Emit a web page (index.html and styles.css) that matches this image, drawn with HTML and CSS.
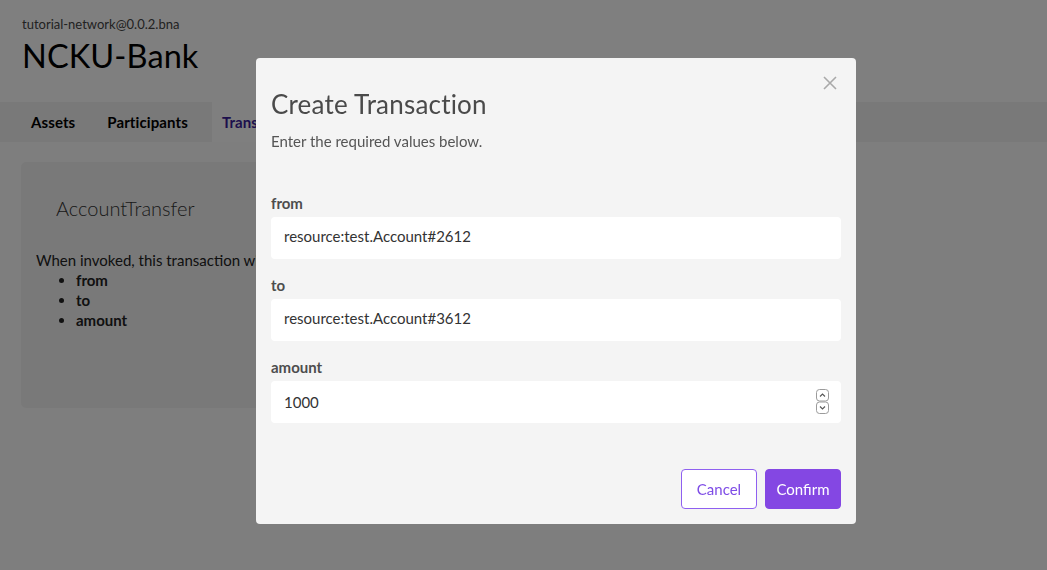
FILE: index.html
```html
<!DOCTYPE html>
<html>
<head>
<meta charset="utf-8">
<link rel="stylesheet" href="styles.css">
</head>
<body>
<div class="page">
  <header class="top">
    <div class="network">tutorial-network@0.0.2.bna</div>
    <h1 class="bank">NCKU-Bank</h1>
  </header>
  <nav class="tabs">
    <div class="tab">Assets</div>
    <div class="tab">Participants</div>
    <div class="tab active">Transactions</div>
  </nav>
  <main class="content">
    <section class="card">
      <h2 class="card-title">AccountTransfer</h2>
      <p class="card-text">When invoked, this transaction will update the following fields</p>
      <ul class="fields">
        <li>from</li>
        <li>to</li>
        <li>amount</li>
      </ul>
    </section>
  </main>
</div>

<div class="overlay">
  <div class="modal">
    <div class="modal-head">
      <h3 class="modal-title">Create Transaction</h3>
      <p class="modal-sub">Enter the required values below.</p>
      <button class="close" aria-label="close">
        <svg width="14" height="14" viewBox="0 0 14 14"><path d="M1 1 L13 13 M13 1 L1 13" stroke="#a9a9a9" stroke-width="1.6" fill="none"/></svg>
      </button>
    </div>
    <div class="modal-body">
      <div class="field">
        <label class="label">from</label>
        <div class="input">resource:test.Account#2612</div>
      </div>
      <div class="field">
        <label class="label">to</label>
        <div class="input">resource:test.Account#3612</div>
      </div>
      <div class="field">
        <label class="label">amount</label>
        <div class="input number">
          <span class="num">1000</span>
          <span class="spin">
            <svg width="13" height="26" viewBox="0 0 13 26">
              <rect x="0.5" y="0.5" width="12" height="11.5" rx="3" fill="#fff" stroke="#9b9b9b"/>
              <path d="M4 7.5 L6.5 5 L9 7.5" stroke="#555" stroke-width="1.1" fill="none"/>
              <rect x="0.5" y="13" width="12" height="11.5" rx="3" fill="#fff" stroke="#9b9b9b"/>
              <path d="M4 17.5 L6.5 20 L9 17.5" stroke="#555" stroke-width="1.1" fill="none"/>
            </svg>
          </span>
        </div>
      </div>
    </div>
    <div class="modal-foot">
      <button class="btn cancel">Cancel</button>
      <button class="btn confirm">Confirm</button>
    </div>
  </div>
</div>
</body>
</html>
```

FILE: styles.css
```css
* { box-sizing: border-box; }
html, body { margin: 0; padding: 0; }
body {
  font-family: Lato, "Liberation Sans", sans-serif;
  background: #fdfdfd;
  width: 1047px;
  height: 570px;
  overflow: hidden;
  color: #222;
}
.page { height: 570px; background: #fdfdfd; }
.top { background: #fff; padding: 16px 22px 0; height: 102px; }
.network { font-size: 13px; color: #444; line-height: 16px; }
.bank { margin: 3px 0 0; font-size: 32.5px; font-weight: 400; line-height: 42px; color: #000; letter-spacing: 0.1px; }
.tabs { display: flex; background: #f3f3f3; height: 40px; padding-left: 15px; }
.tab { padding: 0 16px; font-size: 15px; font-weight: 700; line-height: 40px; color: #000; letter-spacing: 0.1px; }
.tab.active { background: #fff; color: #3b1f9a; padding: 0 10px; margin-left: 8px; }
.content { padding: 20px 21px; background: #fcfcfc; }
.card { width: 560px; height: 246px; background: #f3f3f3; border-radius: 5px; padding: 33px 15px 0; }
.card-title { margin: 0 0 0 20px; font-size: 20px; font-weight: 300; color: #333; line-height: 26px; }
.card-text { margin: 29px 0 0; font-size: 15px; color: #222; line-height: 20px; white-space: nowrap; }
.fields { margin: 0; padding-left: 40px; font-size: 15px; font-weight: 700; line-height: 20px; color: #222; }

.overlay {
  position: fixed; inset: 0;
  background: rgba(0,0,0,0.5);
  padding: 58px 0 0 256px;
}
.modal {
  width: 600px; height: 466px;
  background: #f4f4f4;
  border-radius: 4px;
  display: flex; flex-direction: column;
  color: #4a4a4a;
}
.modal-head { position: relative; padding: 30px 15px 0; height: 120px; }
.modal-title { margin: 0; font-size: 26px; font-weight: 400; line-height: 32px; color: #4a4a4a; letter-spacing: 0.2px; }
.modal-sub { margin: 12px 0 0; font-size: 15px; line-height: 18px; color: #555; }
.close { position: absolute; right: 19px; top: 18px; border: 0; background: transparent; padding: 0; width: 14px; height: 14px; }
.modal-body { padding: 15px 15px 0; flex: 1; }
.field { margin-bottom: 16px; }
.label { display: block; font-size: 15px; font-weight: 700; line-height: 20px; color: #4d4d4d; margin-bottom: 4px; }
.input {
  height: 42px; background: #fff; border-radius: 4px;
  padding: 0 13px 4px; font-size: 15px; line-height: 20px; color: #333;
  display: flex; align-items: center; justify-content: space-between;
}
.num { margin-top: 4px; }
.spin { display: flex; margin-right: -1px; margin-top: 4px; }
.modal-foot { display: flex; justify-content: flex-end; gap: 8px; padding: 0 15px 15px; }
.btn {
  width: 76px; height: 40px; border-radius: 4px;
  font-family: inherit; font-size: 15px; cursor: pointer;
}
.cancel { background: #fff; border: 1px solid #8f60f0; color: #7e4ce6; }
.confirm { background: #8447e3; border: 1px solid #8447e3; color: #fff; }
```
